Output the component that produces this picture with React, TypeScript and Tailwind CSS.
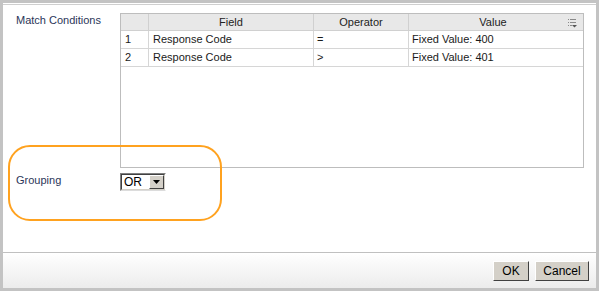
const rows = [
  { n: "1", field: "Response Code", op: "=", value: "Fixed Value: 400" },
  { n: "2", field: "Response Code", op: ">", value: "Fixed Value: 401" },
];

const ColumnsIcon = () => (
  <svg width="9" height="10" viewBox="0 0 9 10" className="absolute right-[6px] top-[4px]">
    <rect x="0" y="1" width="1" height="1" fill="#8a8a8a" />
    <rect x="2" y="1" width="6" height="1" fill="#8a8a8a" />
    <rect x="0" y="4" width="1" height="1" fill="#8a8a8a" />
    <rect x="2" y="4" width="6" height="1" fill="#8a8a8a" />
    <rect x="0" y="7" width="1" height="1" fill="#8a8a8a" />
    <rect x="2" y="7" width="2" height="1" fill="#8a8a8a" />
    <path d="M4 7 L9 7 L6.5 9.5 Z" fill="#555" />
  </svg>
);

const App = () => {
  return (
    <div
      className="relative w-[599px] h-[291px] bg-[#c3c3c3] p-[3px] text-[11px] leading-[13px]"
      style={{ fontFamily: "'Liberation Sans', Arial, sans-serif" }}
    >
      <div className="flex flex-col h-full bg-white">
        <div className="mt-[1px] border-t border-[#cfcfcf]" />
        <div className="flex-1 pl-[13px] pt-[8px]">
          <div className="flex">
            <div className="w-[104px] pt-[1px] text-[#2b3659]">Match Conditions</div>
            <div className="w-[464px] h-[155px] border border-[#bdbdbd] bg-white">
              <div className="grid grid-cols-[28px_165px_95px_174px] bg-[#e8e8e8] h-[17px] border-b border-[#d0d0d0] text-[#222]">
                <div className="border-r border-[#d0d0d0]" />
                <div className="border-r border-[#d0d0d0] flex items-center justify-center">Field</div>
                <div className="border-r border-[#d0d0d0] flex items-center justify-center">Operator</div>
                <div className="relative flex items-center justify-center pr-[6px]">
                  Value
                  <ColumnsIcon />
                </div>
              </div>
              {rows.map((r) => (
                <div
                  key={r.n}
                  className="grid grid-cols-[28px_165px_95px_174px] h-[18px] border-b border-[#d6d6d6] text-[#1a1a1a]"
                >
                  <div className="border-r border-[#d6d6d6] flex items-center pl-[4px]">{r.n}</div>
                  <div className="border-r border-[#d6d6d6] flex items-center pl-[4px]">{r.field}</div>
                  <div className="border-r border-[#d6d6d6] flex items-center pl-[3px]">{r.op}</div>
                  <div className="flex items-center pl-[3px]">{r.value}</div>
                </div>
              ))}
            </div>
          </div>
          <div className="flex mt-[5px]">
            <div className="w-[104px] pt-[1px] text-[#2b3659]">Grouping</div>
            <div className="flex w-[46px] h-[18px] border-t border-l border-[#808080] border-r border-b border-r-white border-b-[#dcdcdc]">
              <div className="flex flex-1 border-t border-l border-[#404040] border-r border-b border-r-[#d4d0c8] border-b-[#d4d0c8] bg-white">
                <div className="flex-1 flex items-center pl-[2px] text-[12px] text-black">OR</div>
                <div className="w-[15px] h-full bg-[#d4d0c8] border-t border-l border-white border-r border-b border-r-[#404040] border-b-[#404040] flex items-center justify-center">
                  <svg width="7" height="4" viewBox="0 0 7 4">
                    <path d="M0 0 L7 0 L3.5 4 Z" fill="#000" />
                  </svg>
                </div>
              </div>
            </div>
          </div>
        </div>
        <div className="h-[36px] border-t border-[#c0c0c0] bg-gradient-to-b from-white to-[#ececec] flex items-center justify-end gap-[6px] pr-[7px] pt-[1px]">
          <button className="w-[36px] h-[20px] bg-[#d4d0c8] border border-t-white border-l-white border-r-[#404040] border-b-[#404040] text-black text-[12px] leading-none">
            OK
          </button>
          <button className="w-[54px] h-[20px] bg-[#d4d0c8] border border-t-white border-l-white border-r-[#404040] border-b-[#404040] text-black text-[12px] leading-none">
            Cancel
          </button>
        </div>
      </div>
      <div className="absolute left-[8px] top-[145px] w-[214px] h-[76px] border-2 border-[#ffa21f] rounded-[22px] pointer-events-none" />
    </div>
  );
};

export default App;
